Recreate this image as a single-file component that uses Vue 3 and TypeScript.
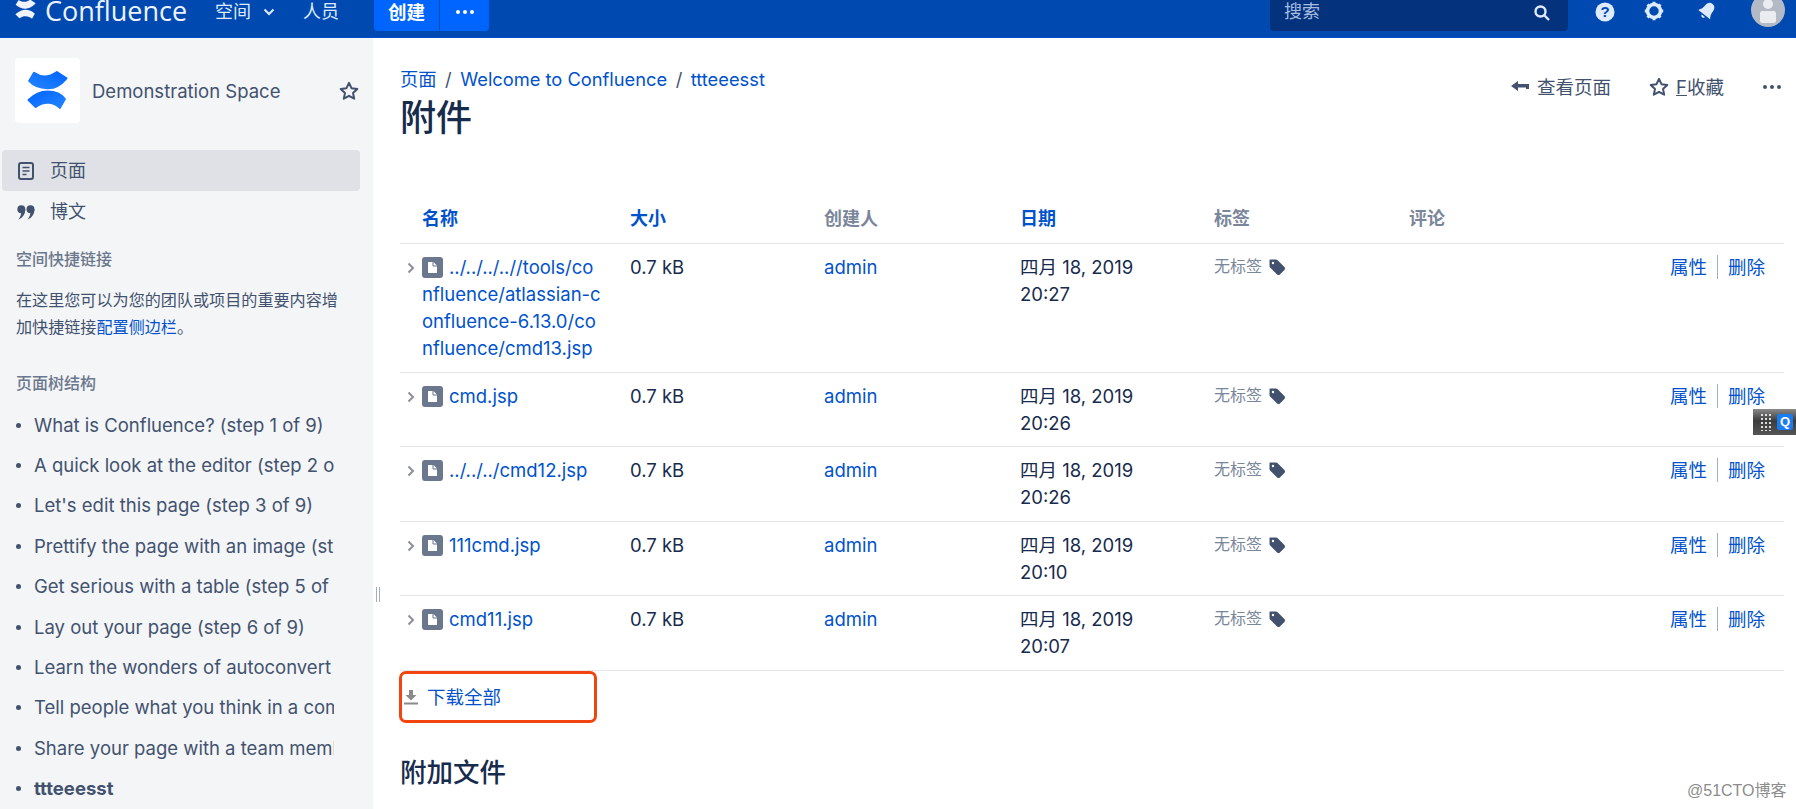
<script setup lang="ts">
type Attachment = {
  name: string
  time: string
}

const treePages = [
  'What is Confluence? (step 1 of 9)',
  'A quick look at the editor (step 2 of 9)',
  "Let's edit this page (step 3 of 9)",
  'Prettify the page with an image (step 4 of 9)',
  'Get serious with a table (step 5 of 9)',
  'Lay out your page (step 6 of 9)',
  'Learn the wonders of autoconvert (step 7 of 9)',
  'Tell people what you think in a comment (step 8 of 9)',
  'Share your page with a team member (step 9 of 9)',
  'ttteeesst',
]

const attachments: Attachment[] = [
  { name: '../../../..//tools/confluence/atlassian-confluence-6.13.0/confluence/cmd13.jsp', time: '20:27' },
  { name: 'cmd.jsp', time: '20:26' },
  { name: '../../../cmd12.jsp', time: '20:26' },
  { name: '111cmd.jsp', time: '20:10' },
  { name: 'cmd11.jsp', time: '20:07' },
]
</script>

<template>
  <div class="page">
    <header class="topbar">
      <svg class="brand-mark" viewBox="12 12 42 42">
        <path d="M19.300 14C25 18 33 20 42.500 13.300L53.300 20.700C45 30 38 31.500 33 31.300C25 31 18 28 13.300 23.300Z" fill="#eef3ff" />
        <path d="M12.700 42.700C20 36 28 33.500 33 33.500C40 33.500 47 36 51.700 41.700L46 51.700C40 46 30 44 20.700 50.700Z" fill="#eef3ff" />
      </svg>
      <span class="brand">Confluence</span>
      <span class="top-link spaces">空间</span>
      <svg class="chev" viewBox="0 0 12 8"><path d="M1.500 1.500 6 6l4.500-4.500" /></svg>
      <span class="top-link people">人员</span>
      <div class="create">
        <span class="create-main">创建</span>
        <span class="create-more"><i /><i /><i /></span>
      </div>
      <div class="top-right">
        <div class="search">
          <span>搜索</span>
          <svg viewBox="0 0 18 18"><circle cx="7.500" cy="7.500" r="5" /><path d="m11.500 11.500 4.500 4.500" /></svg>
        </div>
        <svg class="top-icon help" viewBox="0 0 20 20">
          <circle cx="10" cy="10" r="9.500" fill="#deebff" />
          <text x="10" y="15" text-anchor="middle" class="help-mark">?</text>
        </svg>
        <svg class="top-icon gear" viewBox="0 0 20 20">
          <circle cx="10" cy="10" r="6.500" fill="none" stroke="#deebff" stroke-width="3.600" />
          <path d="M10 0.800V3.500M10 16.500v2.700M0.800 10h2.700M16.500 10h2.700M3.500 3.500l2 2M14.500 14.500l2 2M16.500 3.500l-2 2M5.500 14.500l-2 2" stroke="#deebff" stroke-width="3" />
        </svg>
        <svg class="top-icon bell" viewBox="0 0 20 20">
          <g transform="rotate(38 10 10)" fill="#deebff">
            <path d="M10 1C6 1 5 4.500 5 8C5 11 3.500 13 2.500 14.500H17.500C16.500 13 15 11 15 8C15 4.500 14 1 10 1Z" />
            <path d="M8 16h4a2 2 0 0 1-4 0Z" />
          </g>
        </svg>
        <svg class="avatar" viewBox="0 0 34 34">
          <circle cx="17" cy="17" r="17" fill="#b3bac5" />
          <circle cx="17" cy="11" r="5" fill="#ebecf0" />
          <rect x="9" y="18" width="16" height="12" rx="2.500" fill="#ebecf0" />
        </svg>
      </div>
    </header>

    <div class="body">
      <aside class="sidebar">
        <div class="space">
          <div class="space-logo">
            <svg viewBox="0 0 66 66">
              <defs>
                <linearGradient id="logoTop" x1="1" y1="0" x2="0" y2="1">
                  <stop offset="0" stop-color="#0065ff" />
                  <stop offset="1" stop-color="#2684ff" />
                </linearGradient>
                <linearGradient id="logoBottom" x1="0" y1="0" x2="1" y2="1">
                  <stop offset="0" stop-color="#0065ff" />
                  <stop offset="1" stop-color="#2684ff" />
                </linearGradient>
              </defs>
              <path class="logo-band" d="M19.300 15C25 19 33 21 42.500 14.300L52.300 20.700C45 29.500 38 31 33 30.800C25 30.500 18 27.500 14.300 23.300Z" fill="url(#logoTop)" stroke="url(#logoTop)" />
              <path class="logo-band" d="M13.700 42.700C20 36.500 28 34 33 34C40 34 47 36.500 50.700 41.700L45.500 50.700C40 45 30 43 21 49.700Z" fill="url(#logoBottom)" stroke="url(#logoBottom)" />
            </svg>
          </div>
          <span class="space-name">Demonstration Space</span>
          <svg class="star space-star" viewBox="0 0 20 20"><path d="M10 1.800 12.500 7.200 18.300 7.900 14 11.900 15.200 17.700 10 14.800 4.800 17.700 6 11.900 1.700 7.900 7.500 7.200Z" /></svg>
        </div>

        <nav class="side-nav">
          <a class="side-item active">
            <svg viewBox="0 0 18 20" class="side-icon">
              <rect x="2" y="2" width="14" height="16" rx="2" fill="none" stroke="#42526e" stroke-width="2" />
              <path d="M5.500 6.500h7M5.500 10h7M5.500 13.500h4" stroke="#42526e" stroke-width="1.600" />
            </svg>
            页面
          </a>
          <a class="side-item">
            <svg viewBox="0 0 20 18" class="side-icon quote">
              <circle cx="4.800" cy="6" r="4.400" fill="#42526e" />
              <circle cx="15" cy="6" r="4.400" fill="#42526e" />
              <path d="M9.200 6C9.200 11.500 6.500 15.500 1.500 17.500C4 14.500 4.800 12 4.800 8ZM19.400 6C19.400 11.500 16.700 15.500 11.700 17.500C14.200 14.500 15 12 15 8Z" fill="#42526e" />
            </svg>
            博文
          </a>
        </nav>

        <h4 class="side-heading shortcut-heading">空间快捷链接</h4>
        <p class="side-note">在这里您可以为您的团队或项目的重要内容增加快捷链接<a>配置侧边栏</a>。</p>

        <h4 class="side-heading tree-heading">页面树结构</h4>
        <ul class="tree">
          <li v-for="p in treePages" :key="p" :class="{ current: p === 'ttteeesst' }">
            <span class="tree-dot" />
            <span class="tree-label">{{ p }}</span>
          </li>
        </ul>
      </aside>

      <main class="content">
        <div class="grip"><i /><i /></div>

        <div class="head">
          <div>
            <div class="crumbs">
              <a>页面</a><span class="sep">/</span><a>Welcome to Confluence</a><span class="sep">/</span><a>ttteeesst</a>
            </div>
            <h1 class="title">附件</h1>
          </div>
          <div class="head-actions">
            <span class="head-action">
              <svg class="back" viewBox="0 0 18 12"><path d="M0 5 7 0V3H18V8H15V6.500H7V10Z" /></svg>
              查看页面
            </span>
            <span class="head-action fav">
              <svg class="star" viewBox="0 0 20 20"><path d="M10 1.800 12.500 7.200 18.300 7.900 14 11.900 15.200 17.700 10 14.800 4.800 17.700 6 11.900 1.700 7.900 7.500 7.200Z" /></svg>
              <span><u>F</u>收藏</span>
            </span>
            <span class="head-more"><i /><i /><i /></span>
          </div>
        </div>

        <div class="table">
          <div class="row thead">
            <a class="th sort name-col">名称</a>
            <a class="th sort">大小</a>
            <span class="th">创建人</span>
            <a class="th sort">日期</a>
            <span class="th">标签</span>
            <span class="th">评论</span>
            <span />
          </div>
          <div v-for="a in attachments" :key="a.name" class="row">
            <div class="name-col file">
              <svg class="expand" viewBox="0 0 8 12"><path d="M1.500 1.500 6 6l-4.500 4.500" /></svg>
              <svg class="file-icon" viewBox="0 0 21 21">
                <rect width="21" height="21" rx="3" fill="#6b778c" />
                <path d="M6 5h5.500L15 8.500V16H6Z" fill="#fff" />
                <path d="M11 5v4h4" fill="none" stroke="#6b778c" stroke-width="1" />
              </svg>
              <a class="file-name">{{ a.name }}</a>
            </div>
            <div>0.7 kB</div>
            <div><a>admin</a></div>
            <div>四月 18, 2019<br />{{ a.time }}</div>
            <div class="labels">
              无标签
              <svg viewBox="0 0 18 18">
                <path d="M2 1.500h6c.6 0 1 .2 1.400.6l7 7c.8.8.8 2 0 2.800l-4.500 4.500c-.8.8-2 .8-2.800 0l-7-7C1.700 9 1.500 8.600 1.500 8V2c0-.3.200-.5.500-.5Z" fill="#42526e" />
                <circle cx="5" cy="5" r="1.200" fill="#fff" />
              </svg>
            </div>
            <div />
            <div class="ops"><a>属性</a><i /><a>删除</a></div>
          </div>
        </div>

        <div class="download">
          <svg viewBox="0 0 16 16"><path d="M6 1h4v5h3.500L8 11.500 2.500 6H6ZM1 13.500h14V15.500H1Z" /></svg>
          <a>下载全部</a>
          <div class="annotation" />
        </div>

        <h2 class="attach-title">附加文件</h2>
      </main>
    </div>

    <div class="ime">
      <span class="ime-dots" />
      <span class="ime-q">Q</span>
    </div>
    <div class="watermark">@51CTO博客</div>
  </div>
</template>

<style scoped>
.page {
  position: relative;
  width: 1796px;
  height: 809px;
  overflow: hidden;
  background: #fff;
  color: #172b4d;
  font-family: Inter, "Noto Sans CJK SC", sans-serif;
  font-size: 18.500px;
  line-height: 27px;
}

a {
  color: #0052cc;
}

.topbar {
  height: 38px;
  box-sizing: border-box;
  display: flex;
  align-items: flex-start;
  padding-left: 15px;
  background: #0049b0;
  border-bottom: 1px solid #0052cc;
  overflow: hidden;
  color: #deebff;
}

.brand-mark {
  width: 21px;
  height: 21px;
  margin-top: -1px;
}

.brand {
  margin: -7px 0 0 9px;
  font-family: "Open Sans", sans-serif;
  font-size: 27px;
  line-height: 36px;
  width: 143px;
  white-space: nowrap;
  color: #eef3ff;
}

.top-link {
  font-size: 18px;
  line-height: 24px;
}

.spaces {
  margin-left: 27px;
}

.chev {
  width: 12px;
  height: 8px;
  margin: 8px 0 0 12px;
  fill: none;
  stroke: #deebff;
  stroke-width: 2;
}

.people {
  margin-left: 28px;
}

.create {
  display: flex;
  height: 31px;
  margin-left: 35px;
  background: #0065ff;
  border-radius: 0 0 4px 4px;
  color: #fff;
  font-weight: 700;
  font-size: 18.500px;
  line-height: 24px;
}

.create-main {
  width: 66px;
  box-sizing: border-box;
  padding-left: 14px;
  border-right: 1px solid #0049b0;
}

.create-more {
  width: 49px;
  display: flex;
  justify-content: center;
  gap: 3px;
  padding-top: 10px;
}

.create-more i,
.head-more i {
  width: 4px;
  height: 4px;
  border-radius: 50%;
  background: currentColor;
}

.top-right {
  margin-left: auto;
  display: flex;
  align-items: flex-start;
}

.search {
  width: 298px;
  height: 31px;
  box-sizing: border-box;
  padding: 0 17px 0 14px;
  display: flex;
  justify-content: space-between;
  background: #04327c;
  border-radius: 0 0 4px 4px;
  color: #a5bde0;
  font-size: 18px;
  line-height: 23px;
}

.search svg {
  width: 18px;
  height: 18px;
  margin-top: 4px;
  fill: none;
  stroke: #deebff;
  stroke-width: 2.400;
}

.top-icon {
  width: 20px;
  height: 20px;
  margin-top: 2px;
}

.help {
  margin-left: 27px;
}

.help-mark {
  font-family: "Liberation Sans", sans-serif;
  font-size: 15px;
  font-weight: 700;
  fill: #0049b0;
}

.gear {
  margin: 1px 0 0 29px;
}

.bell {
  margin: 1px 0 0 33px;
}

.avatar {
  width: 34px;
  height: 34px;
  margin: -7px 11px 0 34px;
}

.body {
  display: flex;
  height: 771px;
}

.sidebar {
  width: 373px;
  flex: none;
  box-sizing: border-box;
  padding: 20px 0 0;
  background: #f4f5f7;
  color: #42526e;
  overflow: hidden;
}

.space {
  display: flex;
  align-items: center;
  padding-left: 15px;
}

.space-logo {
  width: 65px;
  height: 65px;
  flex: none;
  display: flex;
  align-items: center;
  justify-content: center;
  background: #fff;
  border-radius: 4px;
}

.space-logo svg {
  width: 65px;
  height: 65px;
}

.logo-band {
  stroke-width: 2;
  stroke-linejoin: round;
}

.space-name {
  margin: 1px 0 0 12px;
  width: 247px;
}

.star {
  width: 20px;
  height: 20px;
  fill: none;
  stroke: #42526e;
  stroke-width: 2;
  stroke-linejoin: round;
}

.side-nav {
  margin: 27px 13px 0 2px;
}

.side-item {
  height: 41px;
  display: flex;
  align-items: center;
  padding-left: 15px;
  border-radius: 4px;
  color: #42526e;
  font-size: 18px;
}

.side-item.active {
  background: #dfe1e6;
}

.side-icon {
  width: 18px;
  height: 20px;
  margin-right: 15px;
}

.side-heading {
  margin: 0;
  color: #6b778c;
  font-size: 16px;
  font-weight: 500;
  line-height: 24px;
  padding-left: 16px;
}

.shortcut-heading {
  margin-top: 15px;
}

.side-note {
  margin: 16px 0 0;
  padding-left: 16px;
  width: 326px;
  font-size: 16.100px;
  line-height: 26.500px;
  box-sizing: content-box;
}

.side-note a {
  color: #0052cc;
}

.tree-heading {
  margin-top: 31px;
}

.tree {
  list-style: none;
  margin: 10px 0 0;
  padding: 0 0 0 16px;
}

.tree li {
  height: 40.400px;
  display: flex;
  align-items: center;
}

.tree-dot {
  width: 5px;
  height: 5px;
  flex: none;
  margin-right: 13px;
  border-radius: 50%;
  background: #42526e;
}

.tree-label {
  width: 300px;
  white-space: nowrap;
  overflow: hidden;
}

.tree .current {
  font-weight: 700;
}

.content {
  position: relative;
  flex: 1;
  min-width: 0;
  padding: 28px 12px 0 27px;
}

.grip {
  position: absolute;
  left: 3px;
  top: 549px;
  display: flex;
  gap: 2px;
}

.grip i {
  width: 1px;
  height: 15px;
  background: #a5adba;
}

.head {
  display: flex;
  justify-content: space-between;
  height: 74px;
}

.crumbs {
  font-size: 18.300px;
}

.sep {
  margin: 0 8.500px;
  color: #42526e;
}

.title {
  margin: 3px 0 0;
  font-size: 36px;
  line-height: 44px;
  font-weight: 500;
}

.head-actions {
  display: flex;
  align-items: center;
  height: 42px;
  padding-right: 3px;
  color: #42526e;
}

.head-action {
  display: flex;
  align-items: center;
}

.back {
  width: 18px;
  height: 12px;
  margin-right: 8px;
  fill: #42526e;
}

.fav {
  margin-left: 38px;
}

.fav .star {
  margin-right: 7px;
}

.head-more {
  display: flex;
  gap: 3px;
  margin-left: 39px;
  color: #42526e;
}

.table {
  margin-top: 53px;
}

.row {
  display: grid;
  grid-template-columns: 230px 194px 196px 194px 195px 1fr auto;
  padding-top: 10px;
  padding-bottom: 9.500px;
  border-bottom: 1px solid #e4e6ec;
  line-height: 27px;
}

.thead {
  padding-top: 12px;
  padding-bottom: 11px;
}

.th {
  color: #7a869a;
  font-size: 18px;
  font-weight: 600;
}

.th.sort {
  color: #0052cc;
}

.name-col {
  padding-left: 22px;
  padding-right: 26px;
}

.file {
  position: relative;
  word-break: break-all;
}

.expand {
  position: absolute;
  left: 7px;
  top: 8px;
  width: 8px;
  height: 12px;
  fill: none;
  stroke: #8a8f99;
  stroke-width: 2;
}

.file-icon {
  width: 21px;
  height: 21px;
  vertical-align: -4px;
  margin-right: 6px;
}

.labels {
  display: flex;
  align-items: flex-start;
  color: #7a869a;
  font-size: 16px;
  line-height: 25px;
}

.labels svg {
  width: 18px;
  height: 18px;
  margin: 4px 0 0 6px;
}

.ops {
  display: flex;
  align-items: flex-start;
  padding-right: 19px;
}

.ops i {
  width: 1px;
  height: 24px;
  margin: 1px 10px 0;
  background: #a5adba;
}

.download {
  position: relative;
  display: flex;
  align-items: center;
  margin-top: 13px;
  padding-left: 3px;
}

.download svg {
  width: 16px;
  height: 16px;
  margin-right: 8px;
  fill: #8a8a8a;
}

.annotation {
  position: absolute;
  left: -1px;
  top: -13px;
  width: 198px;
  height: 52px;
  box-sizing: border-box;
  border: 3px solid #f2440f;
  border-radius: 7px;
}

.attach-title {
  margin: 43px 0 0;
  font-size: 26.500px;
  line-height: 36px;
  font-weight: 500;
}

.ime {
  position: absolute;
  right: 0;
  top: 409px;
  width: 43px;
  height: 26px;
  display: flex;
  align-items: center;
  gap: 6px;
  padding-left: 7px;
  box-sizing: border-box;
  background: linear-gradient(#8a8a8a, #3c3c3c 45%, #555);
}

.ime-dots {
  width: 11px;
  height: 18px;
  background-image: radial-gradient(#ddd 1px, transparent 1.200px);
  background-size: 4px 4px;
}

.ime-q {
  width: 16px;
  height: 16px;
  border-radius: 2px;
  background: #1b7cf0;
  color: #fff;
  font: 700 13px/16px "Liberation Sans", sans-serif;
  text-align: center;
}

.watermark {
  position: absolute;
  left: 1687px;
  top: 780px;
  color: #8c8c8c;
  font-family: "Liberation Sans", "Noto Sans CJK SC", sans-serif;
  font-size: 16px;
  line-height: 22px;
}
</style>
